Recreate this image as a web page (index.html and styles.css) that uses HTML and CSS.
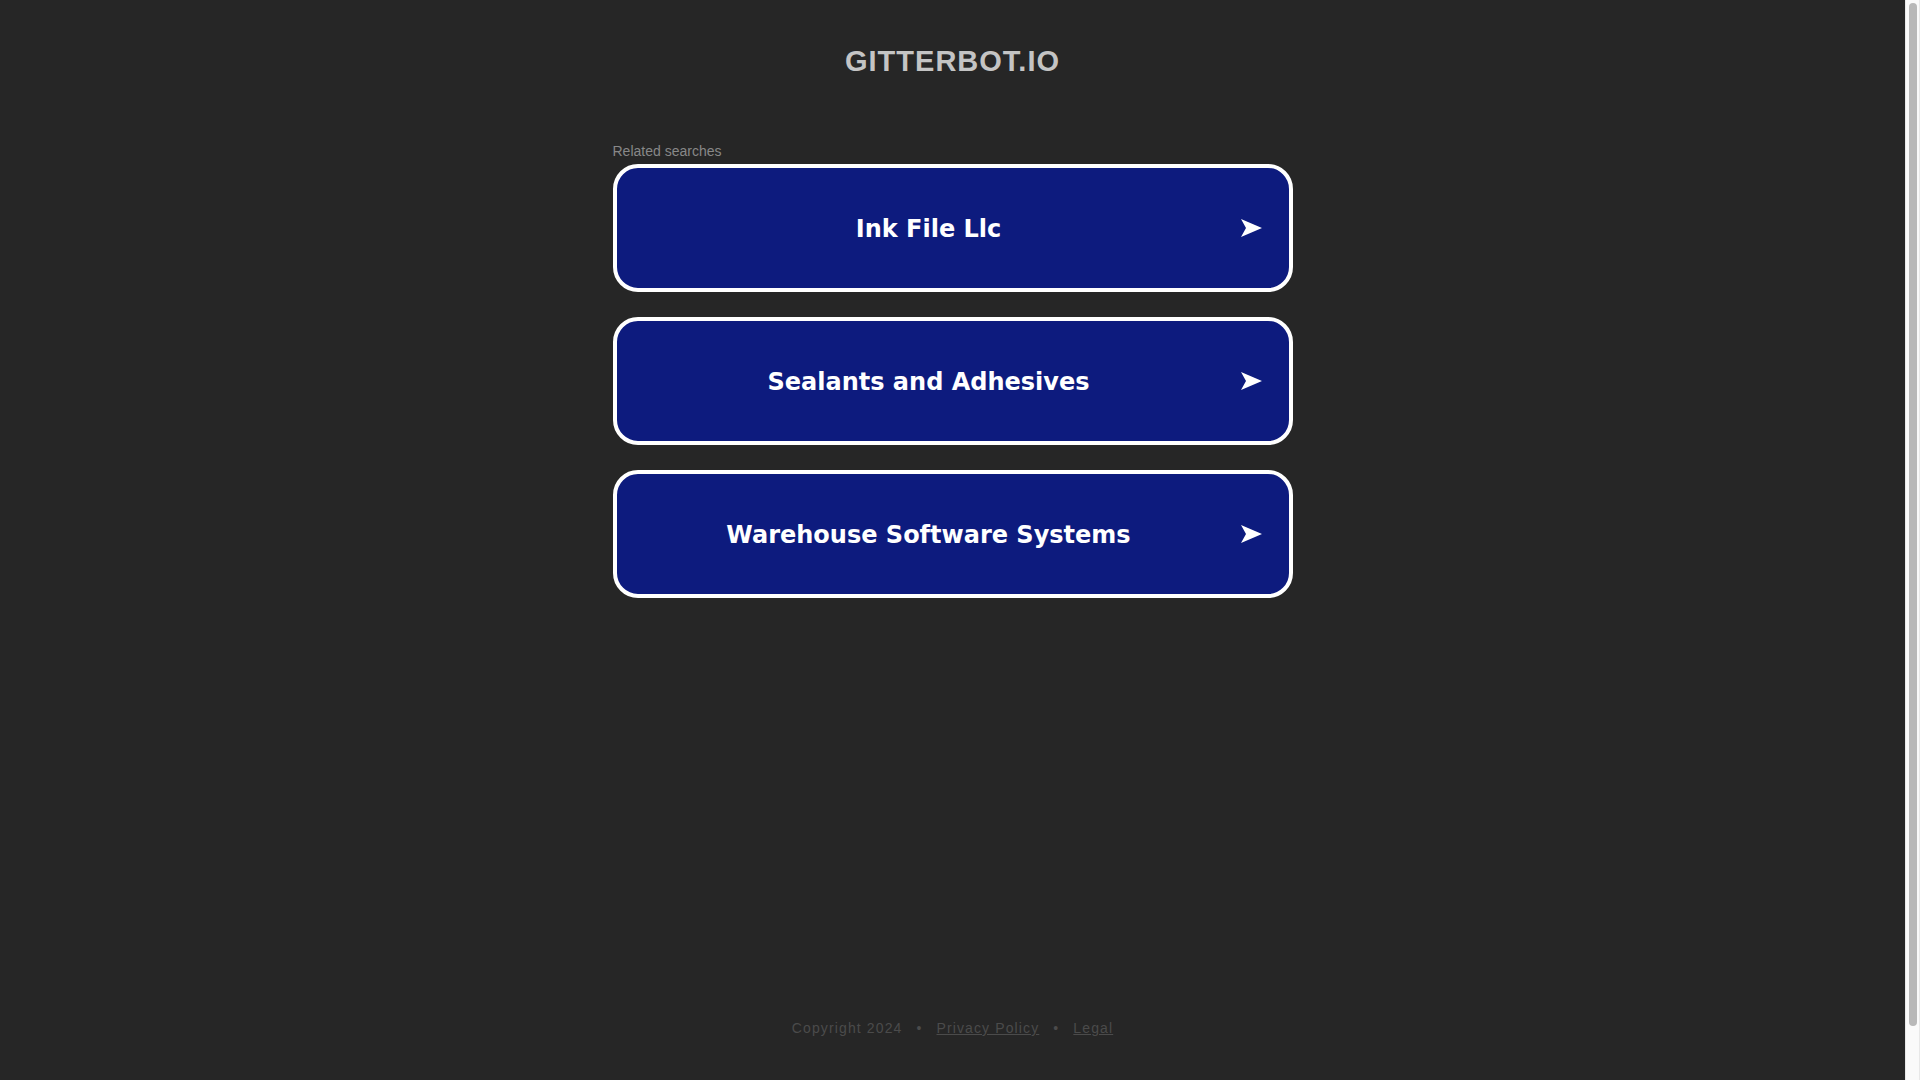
FILE: index.html
```html
<!DOCTYPE html>
<html lang="en">
<head>
<meta charset="utf-8">
<title>gitterbot.io</title>
<meta name="viewport" content="width=device-width, initial-scale=1">
<link rel="stylesheet" href="styles.css">
</head>
<body>
<div class="page">
  <header class="header">
    <h1 class="domain">GITTERBOT.IO</h1>
  </header>
  <main class="searches">
    <h2 class="label">Related searches</h2>
    <nav class="list" aria-label="Related searches">
      <a class="item" href="#"><span class="item-title">Ink File Llc</span><svg class="arrow" viewBox="0 0 21 18" aria-hidden="true"><path d="M0 0 21 9 0 18 5 9Z"/></svg></a>
      <a class="item" href="#"><span class="item-title">Sealants and Adhesives</span><svg class="arrow" viewBox="0 0 21 18" aria-hidden="true"><path d="M0 0 21 9 0 18 5 9Z"/></svg></a>
      <a class="item" href="#"><span class="item-title">Warehouse Software Systems</span><svg class="arrow" viewBox="0 0 21 18" aria-hidden="true"><path d="M0 0 21 9 0 18 5 9Z"/></svg></a>
    </nav>
  </main>
  <footer class="footer">
    <span>Copyright 2024</span>
    <span>•</span>
    <a class="footer-link" href="#">Privacy Policy</a>
    <span>•</span>
    <a class="footer-link" href="#">Legal</a>
  </footer>
</div>
<div class="scrollbar" aria-hidden="true"><div class="thumb"></div></div>
</body>
</html>
```

FILE: styles.css
```css
* {
  box-sizing: border-box;
}

body {
  margin: 0;
  min-height: 100vh;
  display: flex;
  background: #262626;
  color: #fff;
  font-family: "Liberation Sans", Arial, sans-serif;
}

.page {
  flex: 1;
  min-width: 0;
  display: flex;
  flex-direction: column;
}

.header {
  padding: 45px 16px 43px;
  text-align: center;
}

.domain {
  margin: 0;
  color: #c4c4c4;
  font-size: 29px;
  line-height: 32px;
  letter-spacing: 1px;
}

.searches {
  width: 100%;
  max-width: 680px;
  margin: 0 auto;
  padding-top: 22px;
}

.label {
  margin: 0 0 4px;
  color: #888;
  font-size: 14px;
  font-weight: 400;
  line-height: 18px;
}

.list {
  display: flex;
  flex-direction: column;
  gap: 25px;
}

.item {
  display: flex;
  align-items: center;
  min-height: 128px;
  padding: 16px 27px;
  border: 4px solid #fff;
  border-radius: 25px;
  background: #0d1b7e;
  color: #fff;
  text-decoration: none;
}

.item-title {
  flex: 1;
  padding: 2px 27px 0 0;
  text-align: center;
  font-family: Verdana, "DejaVu Sans", sans-serif;
  font-size: 24px;
  font-weight: 700;
  line-height: 32px;
}

.arrow {
  width: 21px;
  height: 18px;
  flex: none;
  fill: #fff;
}

.footer {
  display: flex;
  justify-content: center;
  gap: 14px;
  margin-top: auto;
  padding: 32px 16px 43px;
  color: #4b4b4b;
  font-size: 14px;
  line-height: 18px;
  letter-spacing: 0.08em;
}

.footer-link {
  color: inherit;
}

.scrollbar {
  position: sticky;
  top: 0;
  width: 15px;
  height: 100vh;
  padding: 3px 3px 54px;
  border: solid #e8e8e8;
  border-width: 0 1px;
  background: #fafafa;
}

.thumb {
  width: 8px;
  height: 100%;
  border-radius: 4px;
  background: #b8b8b8;
}
```
